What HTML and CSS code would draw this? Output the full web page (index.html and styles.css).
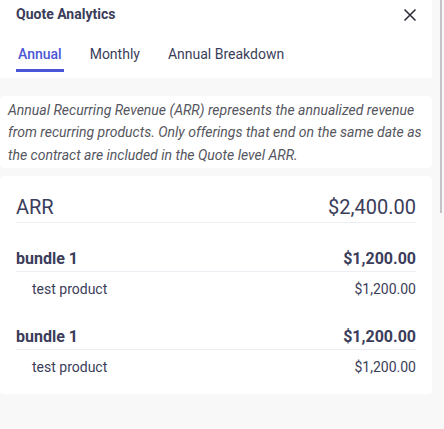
FILE: index.html
```html
<!DOCTYPE html>
<html>
<head>
<meta charset="utf-8">
<link rel="stylesheet" href="styles.css">
</head>
<body>
<div class="header">
  <div class="title-row">
    <div class="title">Quote Analytics</div>
    <svg class="close" width="14" height="14" viewBox="0 0 14 14"><path d="M1.5 1.5 L12.5 12.5 M12.5 1.5 L1.5 12.5" stroke="#2f2f3a" stroke-width="1.6" fill="none"/></svg>
  </div>
  <div class="tabs">
    <div class="tab active">Annual</div>
    <div class="tab">Monthly</div>
    <div class="tab">Annual Breakdown</div>
  </div>
</div>
<div class="main">
  <div class="card desc">Annual Recurring Revenue (ARR) represents the annualized revenue from recurring products. Only offerings that end on the same date as the contract are included in the Quote level ARR.</div>
  <div class="card list">
    <div class="row arr"><span>ARR</span><span>$2,400.00</span></div>
    <div class="group">
      <div class="row bundle"><span>bundle 1</span><span>$1,200.00</span></div>
      <div class="row product"><span>test product</span><span>$1,200.00</span></div>
    </div>
    <div class="group">
      <div class="row bundle"><span>bundle 1</span><span>$1,200.00</span></div>
      <div class="row product"><span>test product</span><span>$1,200.00</span></div>
    </div>
  </div>
</div>
<div class="scroll-thumb"></div>
</body>
</html>
```

FILE: styles.css
```css
html, body {
  margin: 0;
  padding: 0;
}
body {
  background: #f8f8f9;
  font-family: Roboto, "Liberation Sans", sans-serif;
  color: #3b3d5a;
  width: 444px;
  height: 429px;
  overflow: hidden;
  position: relative;
}
.header {
  background: #fff;
  padding: 0 16px 6px 16px;
  margin-right: 12px;
}
.title-row {
  display: flex;
  justify-content: space-between;
  align-items: center;
  height: 28px;
}
.title {
  font-size: 14px;
  font-weight: 700;
  line-height: 28px;
  color: #3a3c5a;
}
.close {
  margin-right: -1px;
  margin-top: 2px;
}
.tabs {
  display: flex;
  gap: 24px;
  margin-top: 16px;
}
.tab {
  font-size: 14px;
  line-height: 20px;
  padding: 0 2px 5px;
  border-bottom: 3px solid transparent;
  color: #3b3d5a;
}
.tab.active {
  color: #4b56d6;
  font-weight: 500;
  border-bottom-color: #4a55d8;
}
.main {
  padding: 18px 12px 0 0;
}
.card {
  background: #fff;
  border-radius: 4px;
}
.desc {
  margin-bottom: 8px;
  padding: 3px 8px 2px;
  font-style: italic;
  font-size: 14px;
  line-height: 22.4px;
  color: #55565e;
}
.list {
  padding: 17px 16px 15px;
}
.row {
  display: flex;
  justify-content: space-between;
}
.arr {
  font-size: 20px;
  line-height: 29px;
  border-bottom: 1px solid #eceef4;
}
.group {
  margin-top: 24px;
}
.bundle {
  font-size: 16px;
  font-weight: 700;
  line-height: 24px;
  border-bottom: 1px solid #eceef4;
}
.product {
  font-size: 14px;
  line-height: 24px;
  padding: 5px 0 0 16px;
}
.scroll-thumb {
  position: absolute;
  left: 440px;
  top: 0;
  width: 2px;
  height: 213px;
  background: #c4c4c6;
}
```
